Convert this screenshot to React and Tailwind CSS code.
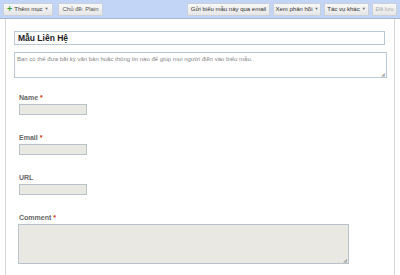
const Btn = ({ children, disabled, className = "" }) => (
    <div
        className={`h-[13px] flex items-center gap-[2px] px-[3px] whitespace-nowrap border border-[#c9d0da] bg-gradient-to-b from-[#f8f8f8] to-[#e6e6e6] text-[6px] leading-none ${disabled ? "text-[#aaa]" : "text-[#333]"} ${className}`}
    >
        {children}
    </div>
);

const Caret = () => <span className="text-[4px] text-[#666]">▼</span>;

const Field = ({ label, required }) => (
    <div className="flex flex-col gap-[2px]">
        <div className="text-[7px] font-bold text-[#666] leading-[8px]">
            {label}
            {required && <span className="text-[#cc3300]"> *</span>}
        </div>
        <div className="w-[68px] h-[11px] border border-[#b9c3cc] bg-[#e9e8e2]" />
    </div>
);

const App = () => {
    return (
        <div className="w-[400px] h-[275px] bg-white overflow-hidden font-['Liberation_Sans',Arial,sans-serif]">
            <div className="h-[19px] bg-[#c3d5f7] border-b border-[#a9b7cc] flex items-center px-[3px]">
                <Btn className="w-[50px]">
                    <span className="text-[#2e9a2e] font-bold text-[9px] leading-none">+</span>
                    <span>Thêm mục</span>
                    <Caret />
                </Btn>
                <Btn className="ml-[5px] w-[45px] justify-center text-[#555]">Chủ đề: Plain</Btn>
                <div className="ml-auto flex gap-[3px]">
                    <Btn className="w-[83px] justify-center">Gửi biểu mẫu này qua email</Btn>
                    <Btn className="w-[48px] justify-center">
                        Xem phản hồi <Caret />
                    </Btn>
                    <Btn className="w-[45px] justify-center">
                        Tác vụ khác <Caret />
                    </Btn>
                    <Btn disabled className="w-[25px] justify-center">Đã lưu</Btn>
                </div>
            </div>
            <div className="ml-[5px] w-[390px] h-[256px] border-l border-r border-[#d6d6d6] pt-[12px] pl-[8px] pr-[7px]">
                <div className="w-[371px] h-[14px] border border-[#b9c8d8] flex items-center px-[3px] text-[8.5px] font-bold text-[#222]">
                    Mẫu Liên Hệ
                </div>
                <div className="mt-[7px] w-[373px] h-[26px] border border-[#b9c8d8] px-[2px] pt-[2px] text-[6px] text-[#888] relative">
                    Bạn có thể đưa bất kỳ văn bản hoặc thông tin nào để giúp mọi người điền vào biểu mẫu.
                    <span className="absolute right-[1px] bottom-0 text-[5px] text-[#aaa] leading-none">◢</span>
                </div>
                <div className="mt-[16px] pl-[5px] flex flex-col gap-[19px]">
                    <Field label="Name" required />
                    <Field label="Email" required />
                    <Field label="URL" />
                    <div className="flex flex-col gap-[2px] -ml-[1px]">
                        <div className="text-[7px] font-bold text-[#666] leading-[8px] ml-[1px]">
                            Comment<span className="text-[#cc3300]"> *</span>
                        </div>
                        <div className="w-[331px] h-[40px] border border-[#b9c3cc] bg-[#e9e8e2] relative">
                            <span className="absolute right-[1px] bottom-0 text-[5px] text-[#aaa] leading-none">◢</span>
                        </div>
                    </div>
                </div>
            </div>
        </div>
    );
};

export default App;
